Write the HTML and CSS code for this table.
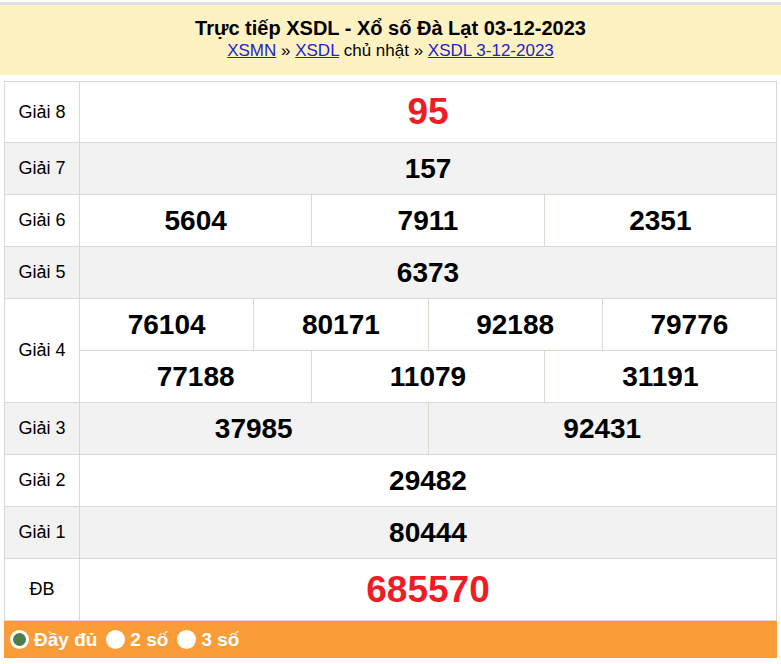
FILE: index.html
```html
<!DOCTYPE html>
<html lang="vi">
<head>
<meta charset="utf-8">
<title>XSDL 03-12-2023</title>
<link rel="stylesheet" href="styles.css">
</head>
<body>
<div class="page">
  <header class="head">
    <h1 class="title">Trực tiếp XSDL - Xổ số Đà Lạt 03-12-2023</h1>
    <div class="crumbs"><a href="#">XSMN</a> » <a href="#">XSDL</a> chủ nhật » <a href="#">XSDL 3-12-2023</a></div>
  </header>

  <div class="results">
    <div class="row tall">
      <div class="label">Giải 8</div>
      <div class="vals"><div class="line"><span class="num red big">95</span></div></div>
    </div>
    <div class="row alt">
      <div class="label">Giải 7</div>
      <div class="vals"><div class="line"><span class="num">157</span></div></div>
    </div>
    <div class="row">
      <div class="label">Giải 6</div>
      <div class="vals"><div class="line"><span class="num">5604</span><span class="num">7911</span><span class="num">2351</span></div></div>
    </div>
    <div class="row alt">
      <div class="label">Giải 5</div>
      <div class="vals"><div class="line"><span class="num">6373</span></div></div>
    </div>
    <div class="row">
      <div class="label">Giải 4</div>
      <div class="vals">
        <div class="line"><span class="num">76104</span><span class="num">80171</span><span class="num">92188</span><span class="num">79776</span></div>
        <div class="line"><span class="num">77188</span><span class="num">11079</span><span class="num">31191</span></div>
      </div>
    </div>
    <div class="row alt">
      <div class="label">Giải 3</div>
      <div class="vals"><div class="line"><span class="num">37985</span><span class="num">92431</span></div></div>
    </div>
    <div class="row">
      <div class="label">Giải 2</div>
      <div class="vals"><div class="line"><span class="num">29482</span></div></div>
    </div>
    <div class="row alt">
      <div class="label">Giải 1</div>
      <div class="vals"><div class="line"><span class="num">80444</span></div></div>
    </div>
    <div class="row tall last">
      <div class="label">ĐB</div>
      <div class="vals"><div class="line"><span class="num red big">685570</span></div></div>
    </div>
  </div>

  <div class="options">
    <label class="opt"><span class="radio on"></span>Đầy đủ</label>
    <label class="opt"><span class="radio"></span>2 số</label>
    <label class="opt"><span class="radio"></span>3 số</label>
  </div>
</div>
</body>
</html>
```
FILE: styles.css
```css
* { box-sizing: border-box; }
html, body { margin: 0; padding: 0; background: #fff; }
body {
  font-family: "Liberation Sans", Arial, sans-serif;
  color: #000;
  padding-top: 2px;
}
.head {
  border-top: 3px solid #e1e2e8;
  background: #fff2c2;
  height: 73px;
  text-align: center;
  padding-top: 11px;
}
.title {
  margin: 0;
  font-size: 20px;
  line-height: 24px;
  font-weight: bold;
}
.crumbs {
  font-size: 17px;
  line-height: 22px;
  margin-top: 0;
}
.crumbs a { color: #2323c8; }

.results {
  margin: 6px 4px 0;
  border-top: 1px solid #ddd7d0;
  border-left: 1px solid #ddd7d0;
}
.row {
  display: flex;
  background: #fff;
}
.row.alt { background: #f2f2f2; }
.label {
  width: 75px;
  flex: none;
  display: flex;
  align-items: center;
  justify-content: center;
  font-size: 18px;
  border-right: 1px solid #ddd7d0;
  border-bottom: 1px solid #ddd7d0;
}
.vals {
  flex: 1;
  display: flex;
  flex-direction: column;
}
.line {
  display: flex;
  height: 52px;
}
.row.tall .line { height: 61px; }
.row.last .line { height: 62px; }
.num {
  flex: 1 1 0;
  display: flex;
  align-items: center;
  justify-content: center;
  font-size: 28px;
  font-weight: bold;
  border-right: 1px solid #ddd7d0;
  border-bottom: 1px solid #ddd7d0;
}
.num.big { font-size: 37px; }
.num.red { color: #ee1c25; }

.options {
  margin: 0 4px;
  background: #fa9c37;
  height: 37px;
  display: flex;
  align-items: center;
  padding-left: 6px;
  gap: 9px;
}
.opt {
  display: flex;
  align-items: center;
  gap: 5px;
  color: #fff;
  font-weight: bold;
  font-size: 19px;
}
.radio {
  width: 19px;
  height: 19px;
  border-radius: 50%;
  background: #fff;
  display: inline-block;
  position: relative;
}
.radio.on::after {
  content: "";
  position: absolute;
  left: 3px;
  top: 3px;
  width: 13px;
  height: 13px;
  border-radius: 50%;
  background: #4b7d4e;
}
```
